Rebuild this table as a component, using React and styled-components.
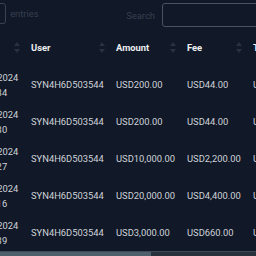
import React from 'react';
import styled, { createGlobalStyle } from 'styled-components';

const GlobalStyle = createGlobalStyle`
  html, body {
    margin: 0;
    padding: 0;
    background: #111827;
    overflow: hidden;
  }
  body {
    font-family: Roboto, "Liberation Sans", sans-serif;
    font-size: 9.4px;
    color: #cfd3da;
  }
`;

// column widths of the table, first one is the date column
const COLS = [59, 85, 71, 66, 82, 88, 95];
const CONTENT_WIDTH = COLS.reduce((a, b) => a + b, 0);
const PAGE_WIDTH = 327;
const GRID = COLS.map((c) => `${c}px`).join(' ');

const rows = [
  { date: '12-03-2024', time: '10:12:34', user: 'SYN4H6D503544', amount: 'USD200.00', fee: 'USD44.00', total: 'USD244.00' },
  { date: '12-03-2024', time: '09:45:30', user: 'SYN4H6D503544', amount: 'USD200.00', fee: 'USD44.00', total: 'USD244.00' },
  { date: '11-03-2024', time: '16:08:27', user: 'SYN4H6D503544', amount: 'USD10,000.00', fee: 'USD2,200.00', total: 'USD12,200.00' },
  { date: '10-03-2024', time: '11:52:16', user: 'SYN4H6D503544', amount: 'USD20,000.00', fee: 'USD4,400.00', total: 'USD24,400.00' },
  { date: '09-03-2024', time: '08:21:39', user: 'SYN4H6D503544', amount: 'USD3,000.00', fee: 'USD660.00', total: 'USD3,660.00' },
];

const Page = styled.div`
  width: ${PAGE_WIDTH}px;
  margin-left: -45px;
`;

const TopBar = styled.div`
  display: flex;
  justify-content: space-between;
  align-items: flex-start;
  padding-top: 3px;
  height: 24px;
  color: #364050;
`;

const LengthControl = styled.div`
  display: flex;
  align-items: center;
  gap: 4px;
  height: 21px;
`;

const SelectBox = styled.div`
  width: 22px;
  height: 19px;
  border: 1px solid #3a4352;
  border-radius: 3px;
`;

const SearchControl = styled.label`
  display: flex;
  align-items: center;
  gap: 7px;
`;

const SearchInput = styled.input`
  box-sizing: border-box;
  width: 120px;
  height: 24px;
  background: transparent;
  border: 1px solid #4a5360;
  border-radius: 3px;
  outline: none;
`;

const Viewport = styled.div`
  overflow: hidden;
  margin-top: 1px;
  border-bottom: 1px solid #3b4a56;
`;

const Table = styled.div`
  width: ${CONTENT_WIDTH}px;
`;

const Row = styled.div`
  display: grid;
  grid-template-columns: ${GRID};
  height: ${(p) => (p.$head ? 38 : 37)}px;
  align-items: center;
`;

const HeadCell = styled.div`
  display: flex;
  align-items: center;
  gap: 11px;
  font-weight: 700;
  color: #eceef1;
  white-space: nowrap;
`;

const Cell = styled.div`
  padding-left: ${(p) => (p.$first ? 16 : 17)}px;
  white-space: nowrap;
  line-height: 15px;
`;

const ScrollTrack = styled.div`
  height: 5px;
  background: #27313d;
`;

const Thumb = styled.div`
  height: 100%;
  background: #4f606d;
`;

const SortIcon = () => (
  <svg width="6" height="11" viewBox="0 0 6 11">
    <path d="M3 0 L6 4 L0 4 Z" fill="#283241" />
    <path d="M0 7 L6 7 L3 11 Z" fill="#283241" />
  </svg>
);

const headers = ['Date', 'User', 'Amount', 'Fee', 'Total', 'Status', 'Action'];

export default function App() {
  const thumbWidth = (PAGE_WIDTH / CONTENT_WIDTH) * PAGE_WIDTH;
  return (
    <Page>
      <GlobalStyle />
      <TopBar>
        <LengthControl>
          <span>Show</span>
          <SelectBox />
          <span>entries</span>
        </LengthControl>
        <SearchControl>
          <span>Search</span>
          <SearchInput type="search" />
        </SearchControl>
      </TopBar>
      <Viewport>
        <Table>
          <Row $head>
            {headers.map((h) => (
              <HeadCell key={h}>
                <SortIcon />
                {h}
              </HeadCell>
            ))}
          </Row>
          {rows.map((r, i) => (
            <Row key={i}>
              <Cell $first>
                {r.date}
                <br />
                {r.time}
              </Cell>
              <Cell>{r.user}</Cell>
              <Cell>{r.amount}</Cell>
              <Cell>{r.fee}</Cell>
              <Cell>{r.total}</Cell>
              <Cell>Completed</Cell>
              <Cell>View</Cell>
            </Row>
          ))}
        </Table>
      </Viewport>
      <ScrollTrack>
        <Thumb style={{ width: thumbWidth }} />
      </ScrollTrack>
    </Page>
  );
}
